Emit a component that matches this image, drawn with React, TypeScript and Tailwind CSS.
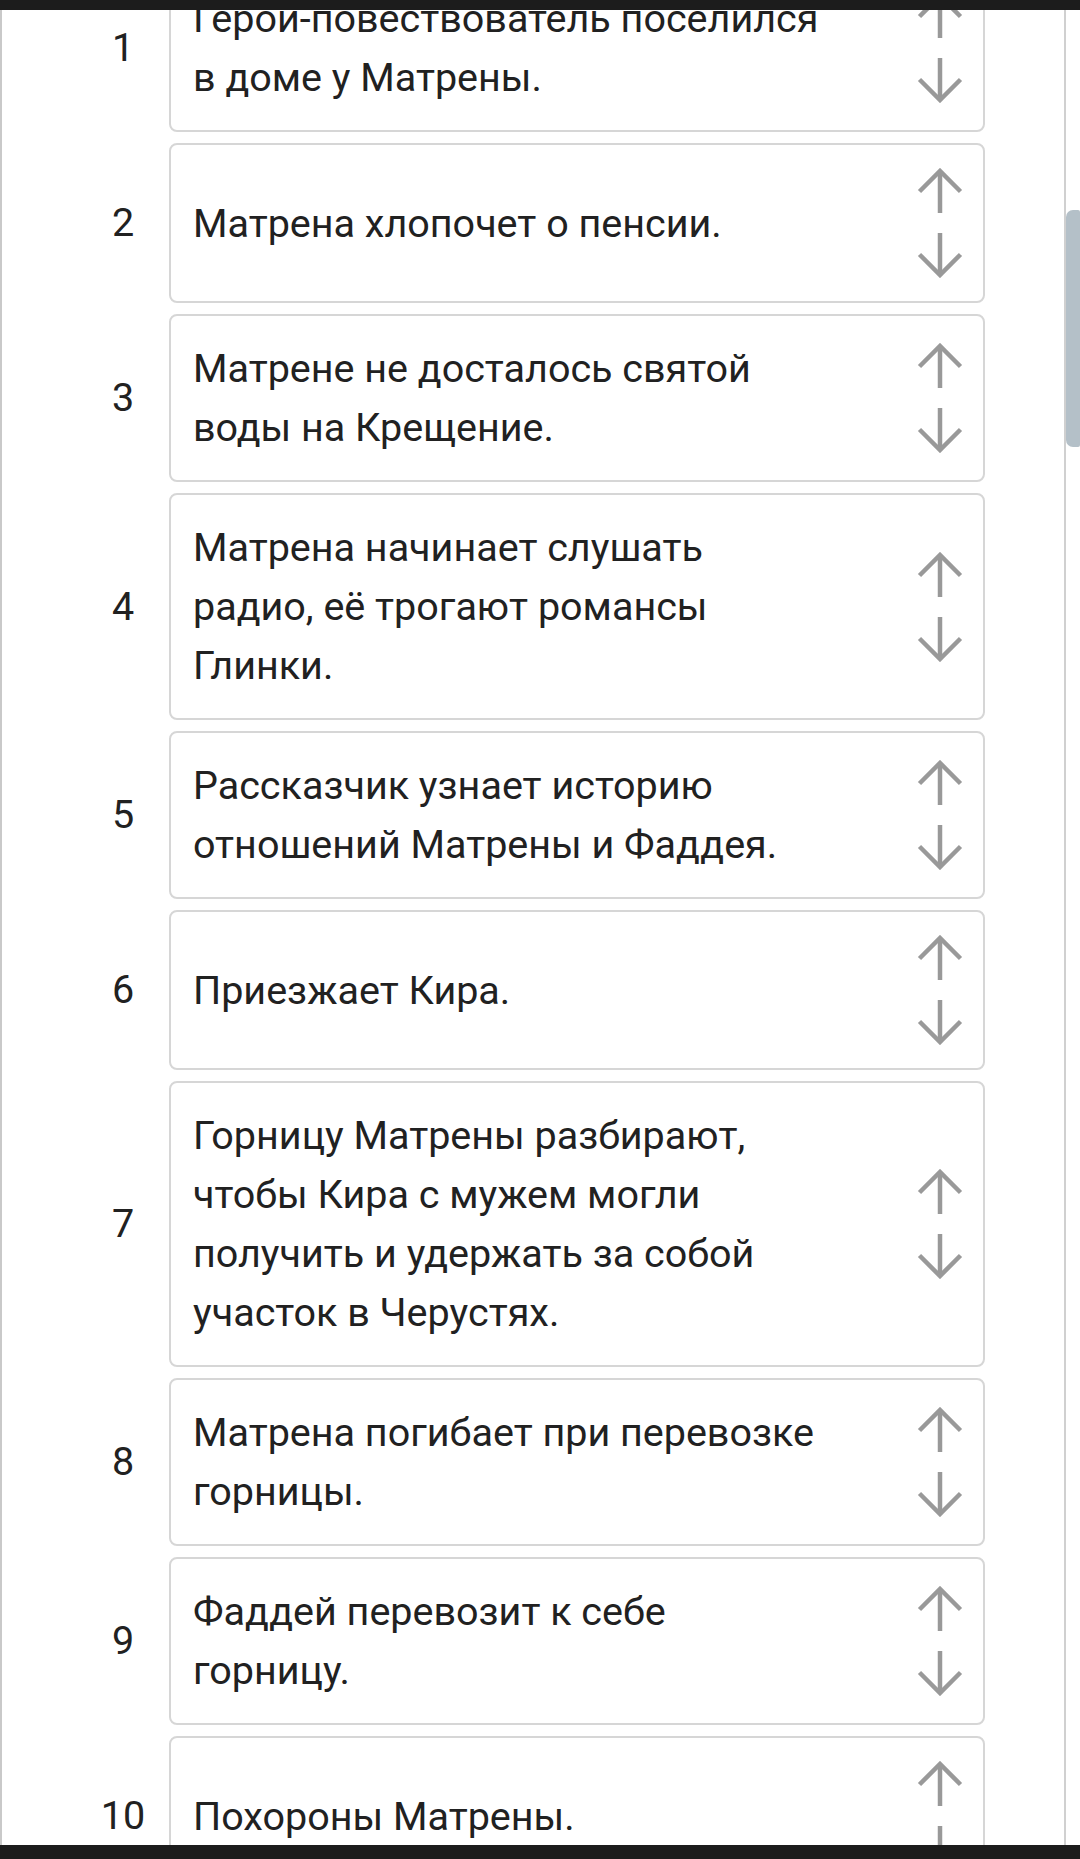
import React from "react";

interface Step {
  id: number;
  text: string;
}

const steps: Step[] = [
  { id: 1, text: "Герой-повествователь поселился в доме у Матрены." },
  { id: 2, text: "Матрена хлопочет о пенсии." },
  { id: 3, text: "Матрене не досталось святой воды на Крещение." },
  { id: 4, text: "Матрена начинает слушать радио, её трогают романсы Глинки." },
  { id: 5, text: "Рассказчик узнает историю отношений Матрены и Фаддея." },
  { id: 6, text: "Приезжает Кира." },
  {
    id: 7,
    text: "Горницу Матрены разбирают, чтобы Кира с мужем могли получить и удержать за собой участок в Черустях.",
  },
  { id: 8, text: "Матрена погибает при перевозке горницы." },
  { id: 9, text: "Фаддей перевозит к себе горницу." },
  { id: 10, text: "Похороны Матрены." },
];

const ArrowUp = () => (
  <svg width="46" height="46" viewBox="0 0 46 46" fill="none" stroke="#999999" strokeWidth="4.5">
    <path d="M23 3V45" />
    <path d="M2.5 23.5L23 3L43.5 23.5" />
  </svg>
);

const ArrowDown = () => (
  <svg width="46" height="46" viewBox="0 0 46 46" fill="none" stroke="#999999" strokeWidth="4.5">
    <path d="M23 1V43" />
    <path d="M2.5 22.5L23 43L43.5 22.5" />
  </svg>
);

const StepRow: React.FC<{ step: Step }> = ({ step }) => {
  return (
    <div className="flex items-center">
      <div className="w-[92px] shrink-0 text-center text-[39.5px] text-[#212121]">
        {step.id}
      </div>
      <div className="flex w-[816px] items-center justify-between rounded-lg border-2 border-[#d6d6d6] bg-white py-[23px] pl-[22px] pr-[20px]">
        <div className="w-[634px] text-[39.5px] leading-[59px] text-[#212121]">
          {step.text}
        </div>
        <div className="flex flex-col items-center gap-[18px]">
          <ArrowUp />
          <ArrowDown />
        </div>
      </div>
    </div>
  );
};

export default function App() {
  return (
    <div
      className="flex h-[1859px] w-[1080px] flex-col bg-white"
      style={{ fontFamily: "Roboto, 'Noto Sans', sans-serif" }}
    >
      <div className="h-[10px] shrink-0 bg-[#1c1c1c]" />
      <div className="flex min-h-0 flex-1">
        <div className="min-w-0 flex-1 overflow-hidden border-l-2 border-r-2 border-l-[#c9c9c9] border-r-[#d0d0d0]">
          <div className="-mt-[46px] flex flex-col gap-[11px] pl-[75px]">
            {steps.map((step) => (
              <StepRow key={step.id} step={step} />
            ))}
          </div>
        </div>
        <div className="w-[14px] shrink-0">
          <div className="mt-[200px] h-[237px] rounded-l-[7px] rounded-r-[2px] bg-[#b4c0c8]" />
        </div>
      </div>
      <div className="h-[14px] shrink-0 bg-[#1c1c1c]" />
    </div>
  );
}
